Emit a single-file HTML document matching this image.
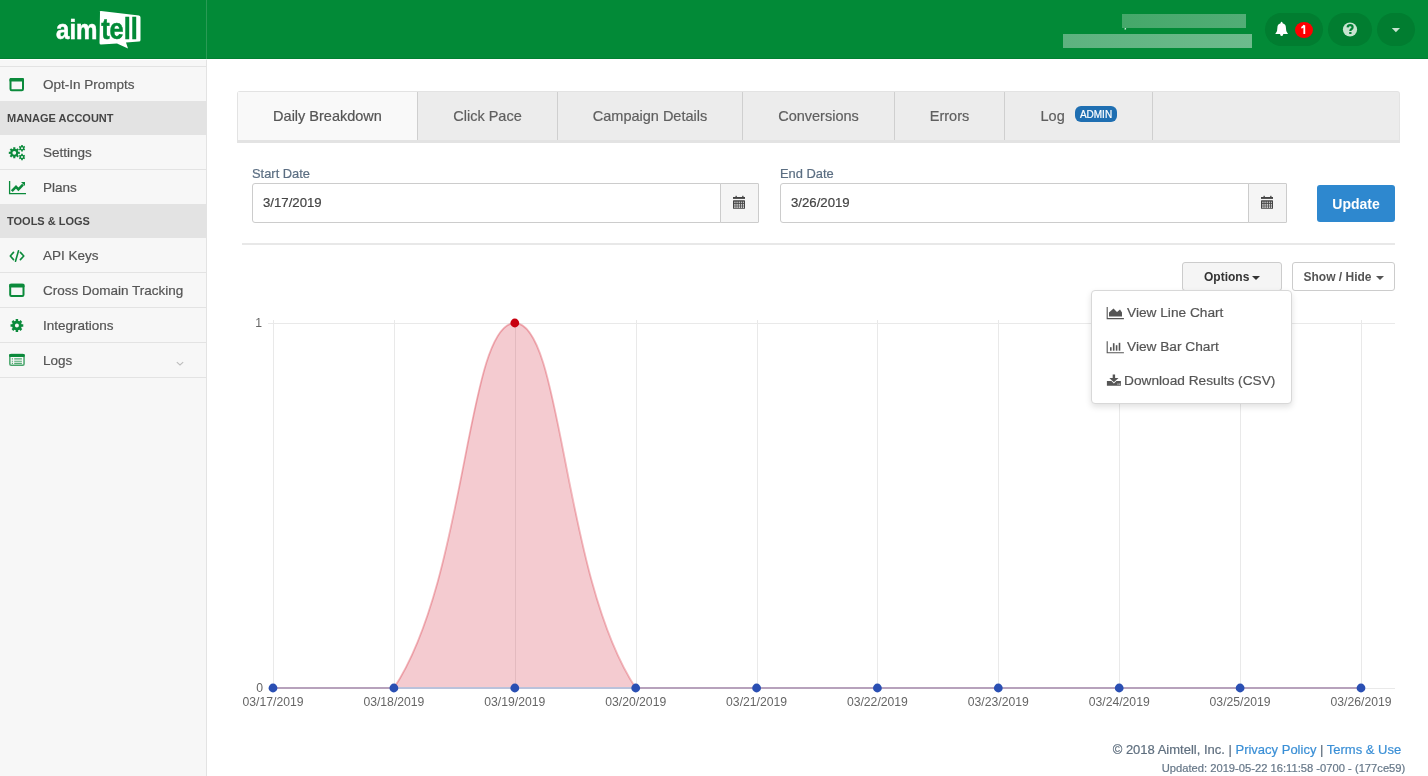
<!DOCTYPE html>
<html><head><meta charset="utf-8">
<style>
*{box-sizing:border-box;margin:0;padding:0}
html,body{width:1428px;height:776px;overflow:hidden;background:#fff;font-family:"Liberation Sans",sans-serif;color:#555;position:relative}
body{will-change:transform;-webkit-text-stroke:0.2px}
.shdr,.btn,.upd{-webkit-text-stroke:0}
.abs{position:absolute}
#hdr{left:0;top:0;width:1428px;height:59px;background:#028a37;border-bottom:1px solid #017f31}
#hdr .div{left:206px;top:0;width:1px;height:59px;background:#2a9a55}
#side{left:0;top:59px;width:207px;height:717px;background:#f7f7f7;border-right:1px solid #e3e3e3;border-top:1px solid #fff}
.item{position:absolute;left:0;width:206px;height:35px;font-size:13.5px;color:#555;line-height:34px;border-top:1px solid #e3e3e3}
.item span{position:absolute;left:43px;top:1px}
.item svg{position:absolute;left:0;top:0}
.shdr{position:absolute;left:0;width:206px;height:34px;background:#e3e3e3;font-size:11px;font-weight:bold;color:#444;line-height:34px;padding-left:7px}
.tabs{left:237px;top:91px;width:1163px;height:52px;background:#ececec;border:1px solid #e3e3e3;border-bottom:3px solid #e3e3e3;border-radius:3px 3px 0 0}
.tab{position:absolute;top:0;height:48px;line-height:48px;font-size:14.5px;color:#5f5f5f;text-align:center;border-right:1px solid #cfcfcf}
.lbl{font-size:12.9px;color:#5b6e82}
.inp{border:1px solid #ccc;border-radius:3px;background:#fff;height:40px;font-size:13.2px;color:#444;line-height:38px;padding-left:10px}
.addon{border:1px solid #ccc;border-radius:0 1px 1px 0;background:#f5f5f5;height:40px;width:39px}
.btn{border:1px solid #ccc;border-radius:3px;font-size:12px;font-weight:bold;height:29px;line-height:29px;text-align:center}
.dd{left:1091px;top:290px;width:201px;height:114px;background:#fff;border:1px solid #d8d8d8;border-radius:4px;box-shadow:0 3px 6px rgba(0,0,0,.12)}
.dd div{position:absolute;left:0;font-size:13.7px;color:#555;height:20px;line-height:20px}
.axl{position:absolute;font-size:12px;color:#666;line-height:14px}
.foot{font-size:13px;color:#5f6f7f;white-space:nowrap}
.foot a{color:#3a8fd6;text-decoration:none}
</style></head><body>
<!-- header -->
<div id="hdr" class="abs">
  <div class="div abs"></div>
  <svg class="abs" style="left:0;top:0" width="206" height="59">
    <text x="56" y="39" font-family="Liberation Sans" font-weight="bold" font-size="28.5" fill="#fff" stroke="#fff" stroke-width="0.5" textLength="41.5" lengthAdjust="spacingAndGlyphs">aim</text>
    <path d="M100 12 Q99 11 101 11 L139 15.5 Q140.5 16 140.5 17.5 L140.5 40 Q140.5 41.5 139 41.5 L126 42.5 L128 48.5 L117 43.5 L101 44.5 Q99.5 44.5 99.5 43 Z" fill="#fff"/>
    <text x="101.2" y="39" font-family="Liberation Sans" font-weight="bold" font-size="29" fill="#028a37" stroke="#028a37" stroke-width="0.5" textLength="36.6" lengthAdjust="spacingAndGlyphs">tell</text>
  </svg>
  <div class="abs" style="left:1122px;top:14px;width:124px;height:14px;background:linear-gradient(90deg,#45a86a,#52ad76)"></div>
  <div class="abs" style="left:1063px;top:34px;width:189px;height:14px;background:linear-gradient(90deg,#5db27f,#6dbb8c)"></div>
  <div class="abs" style="left:1265px;top:13px;width:58px;height:33px;border-radius:17px;background:#017d30"></div>
  <div class="abs" style="left:1328px;top:13px;width:44px;height:33px;border-radius:17px;background:#017d30"></div>
  <div class="abs" style="left:1377px;top:13px;width:38px;height:33px;border-radius:17px;background:#017d30"></div>
  <svg class="abs" style="left:0;top:0" width="1428" height="59">
    <path d="M1281.6 21.8C1282.3 21.8 1282.6 22.6 1282.6 23.2C1284.9 23.8 1285.9 25.5 1285.9 27.5L1286.2 30.5C1286.5 32 1287.3 32.8 1288 33.9L1275.3 33.9C1276 32.8 1276.8 32 1277.1 30.5L1277.4 27.5C1277.4 25.5 1278.4 23.8 1280.6 23.2C1280.6 22.6 1280.9 21.8 1281.6 21.8Z" fill="#fff"/>
    <path d="M1280 33.8H1283.3Q1283.3 36 1281.65 36Q1280 36 1280 33.8Z" fill="#fff"/>
    <ellipse cx="1304" cy="30" rx="9" ry="8" fill="#f00"/>
    <path d="M1304.3 34V25.2M1301.4 27.8Q1303.5 27 1304.3 25.2" stroke="#fff" stroke-width="1.8" fill="none"/>
    <circle cx="1350" cy="29.5" r="7.1" fill="#c8e4d0"/>
    <path d="M1347.6 27.3Q1347.8 25.2 1350.2 25.2Q1352.6 25.2 1352.6 27.2Q1352.6 28.4 1351.3 29.2Q1350.3 29.8 1350.3 31" stroke="#028034" stroke-width="2.2" fill="none"/>
    <rect x="1349.2" y="32" width="2.3" height="2" fill="#028034"/>
    <path d="M1391.8 28H1400L1395.9 32.3Z" fill="#c8e4d0"/>
    <rect x="1124.5" y="28.5" width="1.6" height="1.2" fill="#fff" transform="rotate(-30 1125 29)"/>
  </svg>
</div>

<!-- sidebar -->
<div id="side" class="abs"></div>
<div class="item" style="top:66px"><span>Opt-In Prompts</span></div>
<div class="shdr" style="top:101px">MANAGE ACCOUNT</div>
<div class="item" style="top:135px;border-top:none;height:34px"><span>Settings</span></div>
<div class="item" style="top:169px"><span>Plans</span></div>
<div class="shdr" style="top:204px">TOOLS &amp; LOGS</div>
<div class="item" style="top:238px;border-top:none;height:34px"><span>API Keys</span></div>
<div class="item" style="top:272px"><span>Cross Domain Tracking</span></div>
<div class="item" style="top:307px"><span>Integrations</span></div>
<div class="item" style="top:342px"><span>Logs</span></div>
<div class="abs" style="left:0;top:377px;width:206px;height:1px;background:#e3e3e3"></div>

<svg class="abs" id="sicons" style="left:0;top:0" width="207" height="400">
<rect x="10.5" y="79" width="12.5" height="11.2" rx="1.2" fill="none" stroke="#0b8a3b" stroke-width="2"/><rect x="9.5" y="78" width="14.5" height="3.6" rx="1.2" fill="#0b8a3b"/>
<rect x="10.2" y="284.8" width="13.3" height="11.2" rx="1.2" fill="none" stroke="#0b8a3b" stroke-width="2"/><rect x="9.2" y="283.8" width="15.3" height="3.6" rx="1.2" fill="#0b8a3b"/>
<path d="M13.30 148.82 L13.21 147.31 L15.39 147.31 L15.30 148.82 L16.41 149.28 L17.41 148.14 L18.96 149.69 L17.82 150.69 L18.28 151.80 L19.79 151.71 L19.79 153.89 L18.28 153.80 L17.82 154.91 L18.96 155.91 L17.41 157.46 L16.41 156.32 L15.30 156.78 L15.39 158.29 L13.21 158.29 L13.30 156.78 L12.19 156.32 L11.19 157.46 L9.64 155.91 L10.78 154.91 L10.32 153.80 L8.81 153.89 L8.81 151.71 L10.32 151.80 L10.78 150.69 L9.64 149.69 L11.19 148.14 L12.19 149.28 Z M16.20 152.80 A1.9 1.9 0 1 0 12.40 152.80 A1.9 1.9 0 1 0 16.20 152.80 Z" fill="#0b8a3b" fill-rule="evenodd"/>
<path d="M21.23 145.93 L21.15 145.01 L22.85 145.01 L22.77 145.93 L23.58 146.40 L24.33 145.87 L25.19 147.35 L24.35 147.73 L24.35 148.67 L25.19 149.05 L24.33 150.53 L23.58 150.00 L22.77 150.47 L22.85 151.39 L21.15 151.39 L21.23 150.47 L20.42 150.00 L19.67 150.53 L18.81 149.05 L19.65 148.67 L19.65 147.73 L18.81 147.35 L19.67 145.87 L20.42 146.40 Z M23.00 148.20 A1.0 1.0 0 1 0 21.00 148.20 A1.0 1.0 0 1 0 23.00 148.20 Z" fill="#0b8a3b" fill-rule="evenodd"/>
<path d="M21.23 154.73 L21.15 153.81 L22.85 153.81 L22.77 154.73 L23.58 155.20 L24.33 154.67 L25.19 156.15 L24.35 156.53 L24.35 157.47 L25.19 157.85 L24.33 159.33 L23.58 158.80 L22.77 159.27 L22.85 160.19 L21.15 160.19 L21.23 159.27 L20.42 158.80 L19.67 159.33 L18.81 157.85 L19.65 157.47 L19.65 156.53 L18.81 156.15 L19.67 154.67 L20.42 155.20 Z M23.00 157.00 A1.0 1.0 0 1 0 21.00 157.00 A1.0 1.0 0 1 0 23.00 157.00 Z" fill="#0b8a3b" fill-rule="evenodd"/>
<path d="M15.71 320.75 L15.63 319.12 L18.17 319.12 L18.09 320.75 L19.42 321.30 L20.51 320.10 L22.30 321.89 L21.10 322.98 L21.65 324.31 L23.28 324.23 L23.28 326.77 L21.65 326.69 L21.10 328.02 L22.30 329.11 L20.51 330.90 L19.42 329.70 L18.09 330.25 L18.17 331.88 L15.63 331.88 L15.71 330.25 L14.38 329.70 L13.29 330.90 L11.50 329.11 L12.70 328.02 L12.15 326.69 L10.52 326.77 L10.52 324.23 L12.15 324.31 L12.70 322.98 L11.50 321.89 L13.29 320.10 L14.38 321.30 Z M18.90 325.50 A2.0 2.0 0 1 0 14.90 325.50 A2.0 2.0 0 1 0 18.90 325.50 Z" fill="#0b8a3b" fill-rule="evenodd"/>
<path d="M9.6 181V193.6H26" fill="none" stroke="#0b8a3b" stroke-width="1.3"/>
<path d="M11.8 191.2L16 186.8L18.4 189.4L23 184.6" fill="none" stroke="#0b8a3b" stroke-width="2.5" stroke-linejoin="miter"/>
<path d="M21 182H25V186Z" fill="#0b8a3b"/>
<path d="M13.5 252.4L10.3 256L13.5 259.6M20.4 252.4L23.8 256L20.4 259.6M18.5 250.8L15.5 261.2" fill="none" stroke="#0b8a3b" stroke-width="1.6" stroke-linecap="round" stroke-linejoin="round"/>
<rect x="9.85" y="354.6" width="14.2" height="10.7" rx="1.3" fill="none" stroke="#0b8a3b" stroke-width="1.5" opacity="0.75"/>
<rect x="9.1" y="353.9" width="15.7" height="3.1" rx="1.2" fill="#0b8a3b"/>
<path d="M14.2 358.9H21.9M14.2 361.3H21.9M14.2 363.4H21.9M11.8 358.9H13M11.8 361.3H13M11.8 363.4H13" stroke="#0b8a3b" stroke-width="1.1" opacity="0.7"/>
<path d="M176.8 362.2L180 365L183.2 362.2" fill="none" stroke="#bdbdbd" stroke-width="1.1"/>
</svg>
<!-- tabs -->
<div class="tabs abs">
  <div class="tab" style="left:0;width:180px;background:#f9f9f9;color:#555">Daily Breakdown</div>
  <div class="tab" style="left:180px;width:140px">Click Pace</div>
  <div class="tab" style="left:320px;width:185px">Campaign Details</div>
  <div class="tab" style="left:505px;width:152px">Conversions</div>
  <div class="tab" style="left:657px;width:110px">Errors</div>
  <div class="tab" style="left:767px;width:148px"><span style="position:absolute;left:35.5px;top:0">Log</span><span style="position:absolute;left:69.8px;top:14px;width:42.4px;height:16px;border-radius:6px;background:#1f6fb2;color:#fff;font-size:10px;line-height:18px;text-align:center">ADMIN</span></div>
</div>

<!-- dates -->
<div class="abs lbl" style="left:252px;top:166px">Start Date</div>
<div class="abs inp" style="left:252px;top:183px;width:469px;border-radius:3px 0 0 3px">3/17/2019</div>
<div class="abs addon" style="left:720px;top:183px"></div>
<svg class="abs" style="left:733px;top:190px" width="20" height="22"><g fill="#444"><rect x="2.5" y="5.8" width="1.3" height="1.5"/><rect x="9.2" y="5.8" width="1.3" height="1.5"/><rect x="0" y="7" width="12" height="1.9"/><rect x="0" y="10.3" width="12" height="8.5" rx="0.6"/></g><g fill="#bbb"><rect x="1.2" y="11.6" width="1.4" height="1.6"/><rect x="3.4" y="11.6" width="1.4" height="1.6"/><rect x="5.6" y="11.6" width="1.4" height="1.6"/><rect x="7.8" y="11.6" width="1.4" height="1.6"/><rect x="10" y="11.6" width="1" height="1.6"/></g><g fill="#eee"><rect x="1.2" y="14.2" width="1.4" height="1.4"/><rect x="3.4" y="14.2" width="1.4" height="1.4"/><rect x="5.6" y="14.2" width="1.4" height="1.4"/><rect x="7.8" y="14.2" width="1.4" height="1.4"/><rect x="10" y="14.2" width="1" height="1.4"/><rect x="1.2" y="16.4" width="1.4" height="1.4"/><rect x="3.4" y="16.4" width="1.4" height="1.4"/><rect x="5.6" y="16.4" width="1.4" height="1.4"/><rect x="7.8" y="16.4" width="1.4" height="1.4"/><rect x="10" y="16.4" width="1" height="1.4"/></g></svg>
<div class="abs lbl" style="left:780px;top:166px">End Date</div>
<div class="abs inp" style="left:780px;top:183px;width:469px;border-radius:3px 0 0 3px">3/26/2019</div>
<div class="abs addon" style="left:1248px;top:183px"></div>
<svg class="abs" style="left:1261px;top:190px" width="20" height="22"><g fill="#444"><rect x="2.5" y="5.8" width="1.3" height="1.5"/><rect x="9.2" y="5.8" width="1.3" height="1.5"/><rect x="0" y="7" width="12" height="1.9"/><rect x="0" y="10.3" width="12" height="8.5" rx="0.6"/></g><g fill="#bbb"><rect x="1.2" y="11.6" width="1.4" height="1.6"/><rect x="3.4" y="11.6" width="1.4" height="1.6"/><rect x="5.6" y="11.6" width="1.4" height="1.6"/><rect x="7.8" y="11.6" width="1.4" height="1.6"/><rect x="10" y="11.6" width="1" height="1.6"/></g><g fill="#eee"><rect x="1.2" y="14.2" width="1.4" height="1.4"/><rect x="3.4" y="14.2" width="1.4" height="1.4"/><rect x="5.6" y="14.2" width="1.4" height="1.4"/><rect x="7.8" y="14.2" width="1.4" height="1.4"/><rect x="10" y="14.2" width="1" height="1.4"/><rect x="1.2" y="16.4" width="1.4" height="1.4"/><rect x="3.4" y="16.4" width="1.4" height="1.4"/><rect x="5.6" y="16.4" width="1.4" height="1.4"/><rect x="7.8" y="16.4" width="1.4" height="1.4"/><rect x="10" y="16.4" width="1" height="1.4"/></g></svg>
<div class="abs upd" style="left:1317px;top:185px;width:78px;height:37px;background:#2e88cf;border-radius:3px;color:#fff;font-weight:bold;font-size:14px;line-height:38.5px;text-align:center">Update</div>
<div class="abs" style="left:242px;top:243px;width:1153px;height:2px;background:#e8e8e8"></div>

<!-- options -->
<div class="abs btn" style="left:1182px;top:262px;width:100px;background:#f5f5f5;color:#333"><span style="position:absolute;left:21px;top:0">Options</span><svg style="position:absolute;left:68.5px;top:13px" width="9" height="5"><path d="M0 0H8L4 4Z" fill="#333"/></svg></div>
<div class="abs btn" style="left:1292px;top:262px;width:103px;background:#fff;color:#555"><span style="position:absolute;left:10.5px;top:0">Show / Hide</span><svg style="position:absolute;left:82.5px;top:13px" width="9" height="5"><path d="M0 0H8L4 4Z" fill="#555"/></svg></div>

<!-- chart -->
<svg class="abs" style="left:0;top:0" width="1428" height="776" id="chart">
<path d="M268 323.5H1395M268 688.5H1395" stroke="#e9e9e9" stroke-width="1" fill="none"/>
<path d="M273.5 320V688M394.5 320V688M515.5 320V688M636.5 320V688M757.5 320V688M877.5 320V688M998.5 320V688M1119.5 320V688M1240.5 320V688M1361.5 320V688" stroke="#e9e9e9" stroke-width="1" fill="none"/>
<path d="M393.9 688 C467.5 576.9 466.4 323.0 514.8 323 C563.1 323.0 562.1 576.9 635.7 688 Z" fill="rgba(205,20,40,0.22)"/>
<path d="M393.9 688 C467.5 576.9 466.4 323.0 514.8 323 C563.1 323.0 562.1 576.9 635.7 688" fill="none" stroke="rgba(215,40,55,0.32)" stroke-width="1.8"/>
<path d="M273.0 688H393.9M635.7 688H1361.0" stroke="#b7a2bc" stroke-width="2"/>
<path d="M393.9 688H635.7" stroke="#bac2db" stroke-width="2"/>
<circle cx="273.0" cy="688" r="4.4" fill="#2a4fb3"/>
<circle cx="393.9" cy="688" r="4.4" fill="#2a4fb3"/>
<circle cx="514.8" cy="688" r="4.4" fill="#2a4fb3"/>
<circle cx="635.7" cy="688" r="4.4" fill="#2a4fb3"/>
<circle cx="756.6" cy="688" r="4.4" fill="#2a4fb3"/>
<circle cx="877.4" cy="688" r="4.4" fill="#2a4fb3"/>
<circle cx="998.3" cy="688" r="4.4" fill="#2a4fb3"/>
<circle cx="1119.2" cy="688" r="4.4" fill="#2a4fb3"/>
<circle cx="1240.1" cy="688" r="4.4" fill="#2a4fb3"/>
<circle cx="1361.0" cy="688" r="4.4" fill="#2a4fb3"/>
<circle cx="514.8" cy="323" r="4.4" fill="#c8000f"/>
<g font-family="Liberation Sans" font-size="12.2" fill="#666">
<text x="262" y="327.3" text-anchor="end">1</text>
<text x="263" y="692.3" text-anchor="end">0</text>
<text x="273.0" y="706" text-anchor="middle">03/17/2019</text>
<text x="393.9" y="706" text-anchor="middle">03/18/2019</text>
<text x="514.8" y="706" text-anchor="middle">03/19/2019</text>
<text x="635.7" y="706" text-anchor="middle">03/20/2019</text>
<text x="756.6" y="706" text-anchor="middle">03/21/2019</text>
<text x="877.4" y="706" text-anchor="middle">03/22/2019</text>
<text x="998.3" y="706" text-anchor="middle">03/23/2019</text>
<text x="1119.2" y="706" text-anchor="middle">03/24/2019</text>
<text x="1240.1" y="706" text-anchor="middle">03/25/2019</text>
<text x="1361.0" y="706" text-anchor="middle">03/26/2019</text>
</g>
</svg>

<!-- dropdown -->
<div class="abs dd">
<svg style="position:absolute;left:0;top:0" width="40" height="110"><g fill="#555">
<path d="M15.2 15.9V27.6H31.9" fill="none" stroke="#555" stroke-width="1.1"/>
<path d="M17 25.6V21.5L21.5 17.5L25 21L28 18.5L30 21.5V25.6Z"/>
<path d="M15.2 50.2V61.7H31.9" fill="none" stroke="#555" stroke-width="1.1"/>
<rect x="18" y="56.2" width="1.6" height="3.5"/><rect x="20.9" y="52.2" width="1.6" height="7.5"/><rect x="23.8" y="54.2" width="1.6" height="5.5"/><rect x="26.7" y="51.8" width="1.6" height="7.9"/>
<rect x="20.7" y="83.5" width="2.4" height="4"/><path d="M17.3 87H26.5L21.9 91.3Z"/>
<path d="M14.9 89.9H19.4L21.9 92.4L24.4 89.9H28.9V94.8H14.9Z"/>
</g><rect x="25.5" y="92.6" width="1" height="1" fill="#fff"/><rect x="27.2" y="92.6" width="1" height="1" fill="#fff"/></svg>

  <div style="left:35px;top:12px">View Line Chart</div>
  <div style="left:35px;top:46px">View Bar Chart</div>
  <div style="left:32px;top:80px">Download Results (CSV)</div>
</div>

<div class="abs foot" style="left:1112.7px;top:742px">© 2018 Aimtell, Inc. | <a>Privacy Policy</a> | <a>Terms &amp; Use</a></div>
<div class="abs foot" style="left:1161.7px;top:762px;font-size:11.2px;color:#667788">Updated: 2019-05-22 16:11:58 -0700 - (177ce59)</div>
</body></html>
